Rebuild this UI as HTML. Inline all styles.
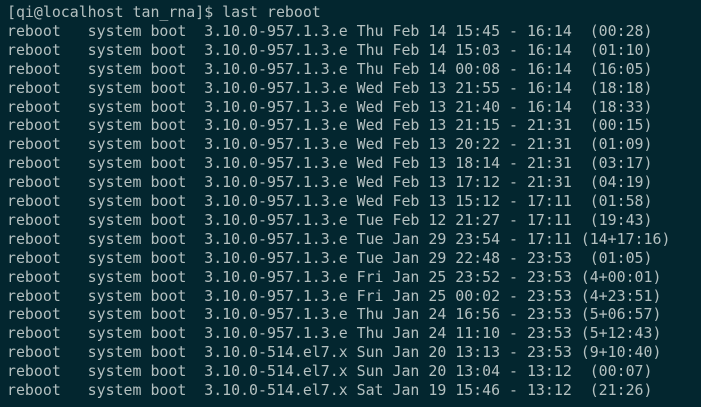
<!DOCTYPE html>
<html><head><meta charset="utf-8"><style>
html,body{margin:0;padding:0;background:#03262f;width:701px;height:407px;overflow:hidden;position:relative}
div{position:absolute;left:7px;height:20px;font-family:"DejaVu Sans Mono","Liberation Mono",monospace;font-size:14.9px;line-height:20px;color:#b4c0c0;white-space:pre}
</style></head><body>
<div style="top:2px">[qi@localhost tan_rna]$ last reboot</div>
<div style="top:20.9px">reboot   system boot  3.10.0-957.1.3.e Thu Feb 14 15:45 - 16:14  (00:28)</div>
<div style="top:39.8px">reboot   system boot  3.10.0-957.1.3.e Thu Feb 14 15:03 - 16:14  (01:10)</div>
<div style="top:58.7px">reboot   system boot  3.10.0-957.1.3.e Thu Feb 14 00:08 - 16:14  (16:05)</div>
<div style="top:77.6px">reboot   system boot  3.10.0-957.1.3.e Wed Feb 13 21:55 - 16:14  (18:18)</div>
<div style="top:96.5px">reboot   system boot  3.10.0-957.1.3.e Wed Feb 13 21:40 - 16:14  (18:33)</div>
<div style="top:115.4px">reboot   system boot  3.10.0-957.1.3.e Wed Feb 13 21:15 - 21:31  (00:15)</div>
<div style="top:134.3px">reboot   system boot  3.10.0-957.1.3.e Wed Feb 13 20:22 - 21:31  (01:09)</div>
<div style="top:153.2px">reboot   system boot  3.10.0-957.1.3.e Wed Feb 13 18:14 - 21:31  (03:17)</div>
<div style="top:172.1px">reboot   system boot  3.10.0-957.1.3.e Wed Feb 13 17:12 - 21:31  (04:19)</div>
<div style="top:191px">reboot   system boot  3.10.0-957.1.3.e Wed Feb 13 15:12 - 17:11  (01:58)</div>
<div style="top:209.9px">reboot   system boot  3.10.0-957.1.3.e Tue Feb 12 21:27 - 17:11  (19:43)</div>
<div style="top:228.8px">reboot   system boot  3.10.0-957.1.3.e Tue Jan 29 23:54 - 17:11 (14+17:16)</div>
<div style="top:247.7px">reboot   system boot  3.10.0-957.1.3.e Tue Jan 29 22:48 - 23:53  (01:05)</div>
<div style="top:266.6px">reboot   system boot  3.10.0-957.1.3.e Fri Jan 25 23:52 - 23:53 (4+00:01)</div>
<div style="top:285.5px">reboot   system boot  3.10.0-957.1.3.e Fri Jan 25 00:02 - 23:53 (4+23:51)</div>
<div style="top:304.4px">reboot   system boot  3.10.0-957.1.3.e Thu Jan 24 16:56 - 23:53 (5+06:57)</div>
<div style="top:323.3px">reboot   system boot  3.10.0-957.1.3.e Thu Jan 24 11:10 - 23:53 (5+12:43)</div>
<div style="top:342.2px">reboot   system boot  3.10.0-514.el7.x Sun Jan 20 13:13 - 23:53 (9+10:40)</div>
<div style="top:361.1px">reboot   system boot  3.10.0-514.el7.x Sun Jan 20 13:04 - 13:12  (00:07)</div>
<div style="top:380px">reboot   system boot  3.10.0-514.el7.x Sat Jan 19 15:46 - 13:12  (21:26)</div>
</body></html>
